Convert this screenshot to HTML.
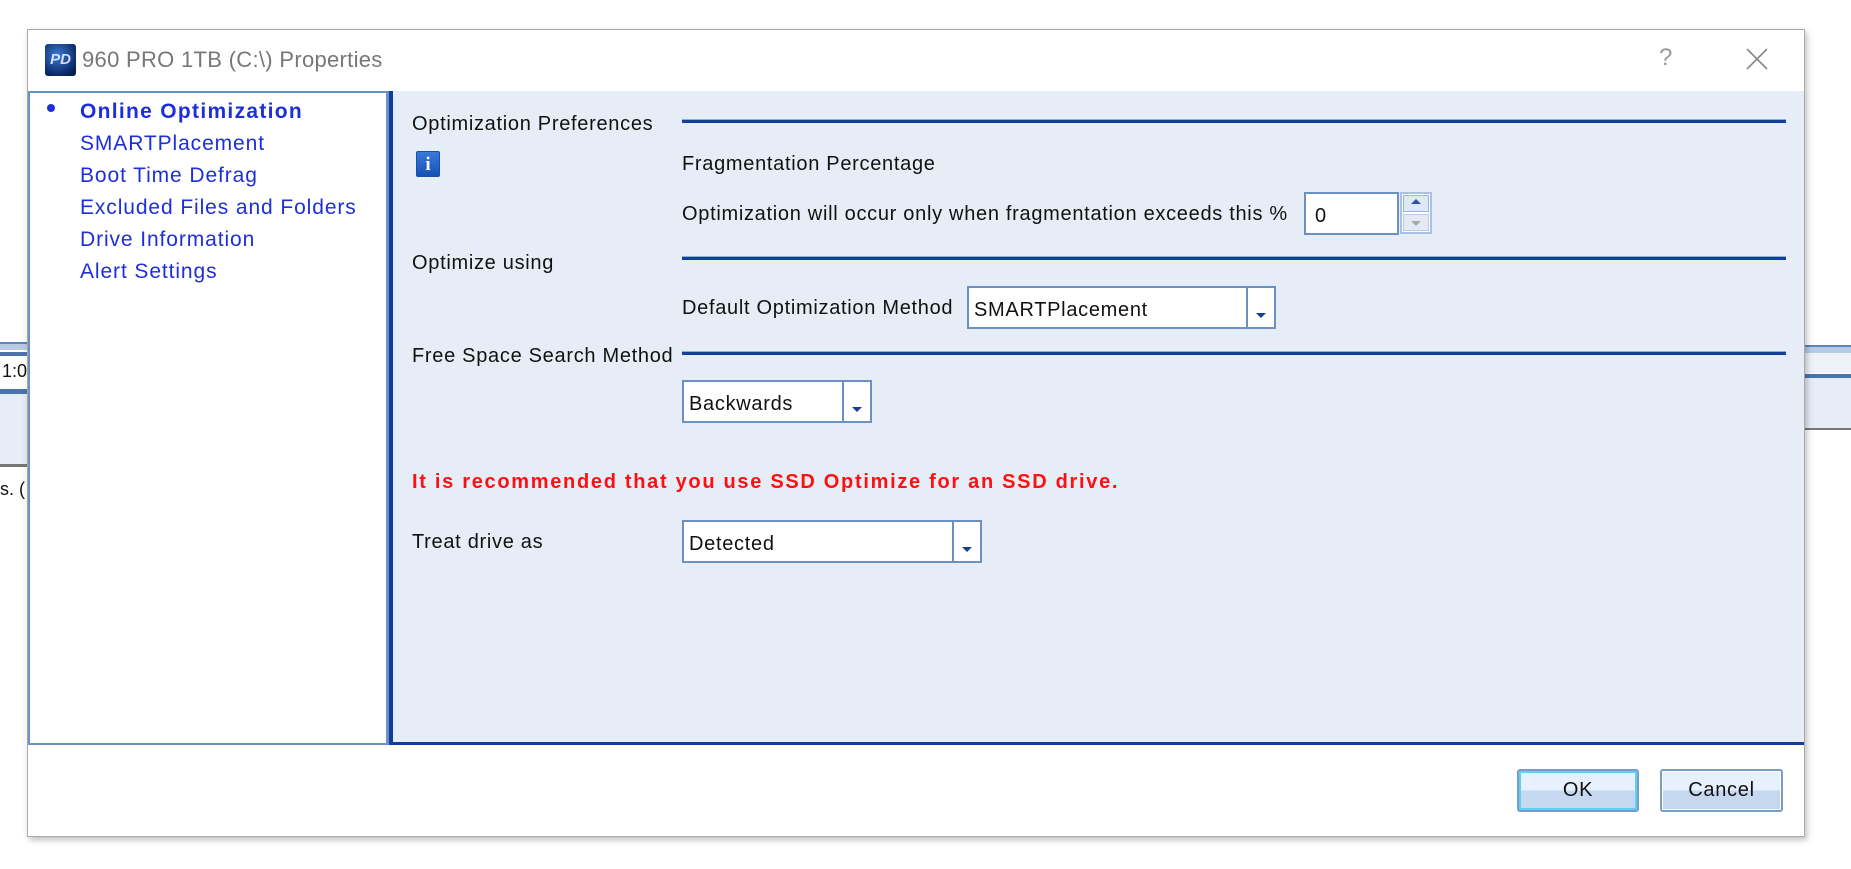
<!DOCTYPE html>
<html><head><meta charset="utf-8"><style>
*{margin:0;padding:0;box-sizing:border-box}
body{width:1851px;height:869px;background:#fff;position:relative;overflow:hidden;font-family:"Liberation Sans","DejaVu Sans",sans-serif;font-size:20px;letter-spacing:0.7px;color:#111}
.a{position:absolute}
.t{position:absolute;white-space:nowrap;line-height:1}
.line{position:absolute;height:4px;border-top:1px solid #8fb0dc;border-bottom:3px solid #0f3f9a}
.box{position:absolute;background:#fff;border:2px solid #6a90c4}
.dd{position:absolute;top:0;bottom:0;border-left:2px solid #6a90c4;width:28px}
.dd:after{content:"";position:absolute;left:8px;bottom:9px;border-left:5px solid transparent;border-right:5px solid transparent;border-top:5px solid #1a3f8f}
.tree{color:#1c2fd8;font-size:21px;letter-spacing:0.9px}
.btn{position:absolute;border:2px solid #7a9cc8;border-radius:3px;background:linear-gradient(#e6f1fd 0,#e6f1fd 48%,#c5d8ef 52%,#c5d8ef 100%);text-align:center;font-size:20px;line-height:39px;color:#111}
</style></head><body>
<div class="a" style="left:0;top:342px;width:28px;height:8px;background:#b9cbe4;border-top:2px solid #5a86c0"></div>
<div class="a" style="left:0;top:352px;width:28px;height:4px;background:#4b74ad"></div>
<div class="t" style="left:2px;top:362px;font-size:18px;letter-spacing:0">1:0</div>
<div class="a" style="left:0;top:389px;width:28px;height:5px;background:#4b74ad"></div>
<div class="a" style="left:0;top:394px;width:28px;height:70px;background:#e6edf6"></div>
<div class="a" style="left:0;top:464px;width:28px;height:3px;background:#777"></div>
<div class="t" style="left:0;top:480px;font-size:18px;letter-spacing:0">s. (</div>
<div class="a" style="left:1805px;top:345px;width:46px;height:8px;background:#b9cbe4;border-top:2px solid #5a86c0"></div>
<div class="a" style="left:1805px;top:353px;width:46px;height:20px;background:#eef3f9"></div>
<div class="a" style="left:1805px;top:374px;width:46px;height:4px;background:#4b74ad"></div>
<div class="a" style="left:1805px;top:378px;width:46px;height:50px;background:#e6edf6"></div>
<div class="a" style="left:1805px;top:428px;width:46px;height:2px;background:#777"></div>

<div class="a" style="left:27px;top:29px;width:1778px;height:808px;background:#fff;border:1px solid #aaa;box-shadow:2px 3px 6px rgba(0,0,0,.25)"></div>
<div class="a" style="left:45px;top:44px;width:31px;height:32px;border-radius:3px;background:radial-gradient(circle at 40% 35%,#3d78d0,#0b2a6a 70%,#061634);color:#cfe0ff;font:italic bold 15px 'Liberation Sans',sans-serif;letter-spacing:0;line-height:32px;text-align:center">PD</div>
<div class="t" style="left:82px;top:49px;font-size:22px;letter-spacing:0.3px;color:#777">960 PRO 1TB (C:\) Properties</div>
<div class="t" style="left:1659px;top:46px;font-size:24px;color:#999">?</div>
<svg class="a" style="left:1746px;top:48px" width="22" height="22"><path d="M1 1L21 21M21 1L1 21" stroke="#888" stroke-width="1.6"/></svg>

<div class="a" style="left:28px;top:91px;width:361px;height:654px;background:#fff;border:2px solid #6a90c4;border-right:3px solid #6a90c4"></div>
<div class="a" style="left:47px;top:104px;width:8px;height:8px;border-radius:50%;background:#1c2fd8"></div>
<div class="t tree" style="left:80px;top:101px;font-weight:bold;letter-spacing:1.3px">Online Optimization</div>
<div class="t tree" style="left:80px;top:133px">SMARTPlacement</div>
<div class="t tree" style="left:80px;top:165px">Boot Time Defrag</div>
<div class="t tree" style="left:80px;top:197px">Excluded Files and Folders</div>
<div class="t tree" style="left:80px;top:229px">Drive Information</div>
<div class="t tree" style="left:80px;top:261px">Alert Settings</div>

<div class="a" style="left:389px;top:91px;width:4px;height:654px;background:#0f3f9a"></div>
<div class="a" style="left:393px;top:91px;width:1411px;height:651px;background:#e6edf6"></div>
<div class="a" style="left:389px;top:742px;width:1415px;height:3px;background:#0f3f9a"></div>

<div class="t" style="left:412px;top:114px">Optimization Preferences</div>
<div class="line" style="left:682px;top:119px;width:1104px"></div>
<div class="a" style="left:416px;top:151px;width:24px;height:26px;border-radius:2px;background:linear-gradient(#3a7ad8,#1550b8);border:1px solid #1a4fa8;color:#fff;font:bold 19px 'Liberation Serif',serif;letter-spacing:0;text-align:center;line-height:25px">i</div>
<div class="t" style="left:682px;top:154px">Fragmentation Percentage</div>
<div class="t" style="left:682px;top:204px">Optimization will occur only when fragmentation exceeds this %</div>
<div class="box" style="left:1304px;top:192px;width:95px;height:43px"><div class="t" style="left:9px;top:12px">0</div></div>
<div class="a" style="left:1400px;top:192px;width:32px;height:42px;border:2px solid #a9c2e4;background:#fff"></div>
<div class="a" style="left:1403px;top:195px;width:26px;height:17px;background:#dfe9f6;border:1px solid #9bb6dc"></div>
<div class="a" style="left:1403px;top:214px;width:26px;height:17px;background:#e3eaf3;border:1px solid #b8c9e0"></div>
<div class="a" style="left:1411px;top:199px;border-left:5px solid transparent;border-right:5px solid transparent;border-bottom:5px solid #2a55a8"></div>
<div class="a" style="left:1411px;top:221px;border-left:5px solid transparent;border-right:5px solid transparent;border-top:5px solid #aaa"></div>

<div class="t" style="left:412px;top:253px">Optimize using</div>
<div class="line" style="left:682px;top:256px;width:1104px"></div>
<div class="t" style="left:682px;top:298px">Default Optimization Method</div>
<div class="box" style="left:967px;top:286px;width:309px;height:43px"><div class="t" style="left:5px;top:12px">SMARTPlacement</div><div class="dd" style="right:0"></div></div>

<div class="t" style="left:412px;top:346px">Free Space Search Method</div>
<div class="line" style="left:682px;top:351px;width:1104px"></div>
<div class="box" style="left:682px;top:380px;width:190px;height:43px"><div class="t" style="left:5px;top:12px">Backwards</div><div class="dd" style="right:0"></div></div>

<div class="t" style="left:412px;top:472px;color:#ff1010;font-weight:bold;letter-spacing:1.7px">It is recommended that you use SSD Optimize for an SSD drive.</div>
<div class="t" style="left:412px;top:532px">Treat drive as</div>
<div class="box" style="left:682px;top:520px;width:300px;height:43px"><div class="t" style="left:5px;top:12px">Detected</div><div class="dd" style="right:0"></div></div>

<div class="btn" style="left:1517px;top:769px;width:122px;height:43px;box-shadow:inset 0 0 0 2px #5fd0f5">OK</div>
<div class="btn" style="left:1660px;top:769px;width:123px;height:43px;box-shadow:inset 0 0 0 1px #fff">Cancel</div>
</body></html>
